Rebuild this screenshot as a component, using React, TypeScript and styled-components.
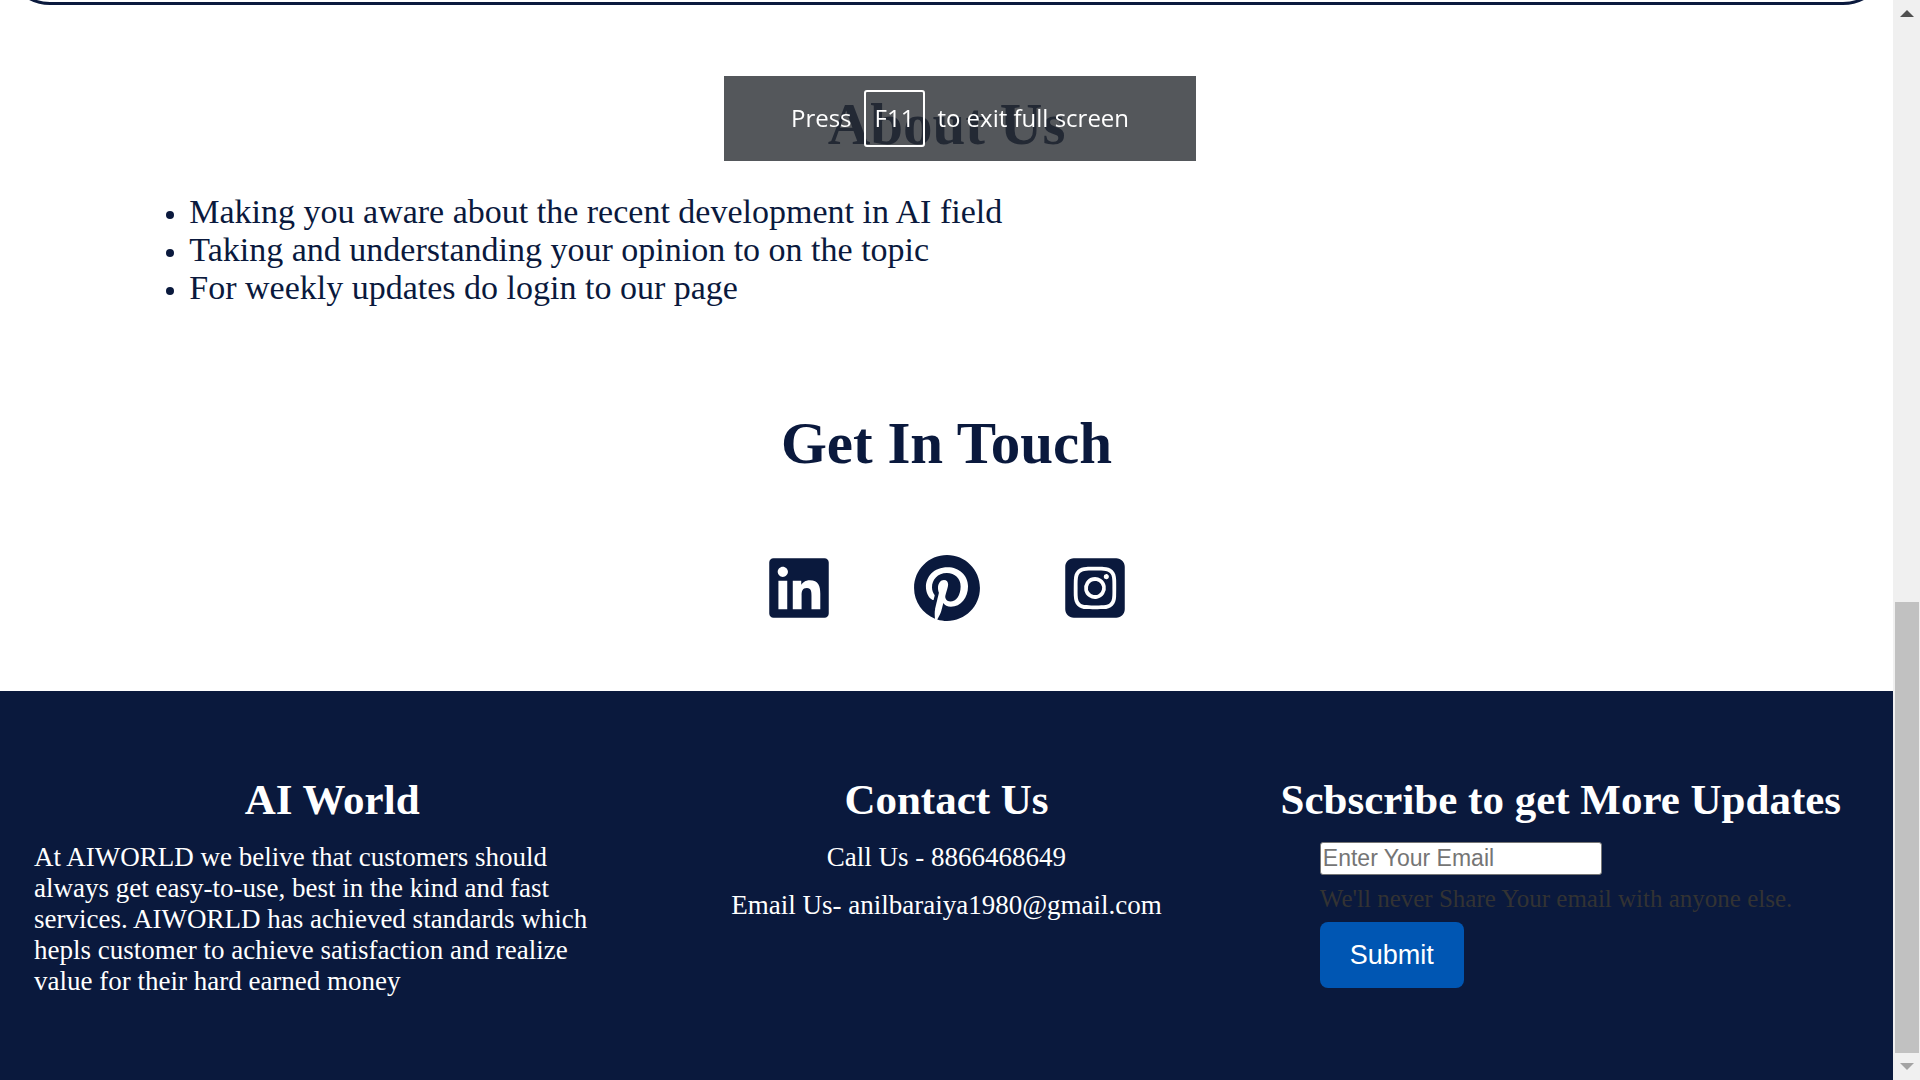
import React from 'react';
import styled, { createGlobalStyle } from 'styled-components';
import { FaLinkedin, FaPinterest, FaSquareInstagram } from 'react-icons/fa6';

const NAVY = '#0a193d';
const SERIF = '"Liberation Serif", "Times New Roman", serif';
const SANS = '"Liberation Sans", Arial, sans-serif';

const GlobalStyle = createGlobalStyle`
  *, *::before, *::after { box-sizing: border-box; }
  body { margin: 0; background: #fff; color: ${NAVY}; font-family: ${SERIF}; }
  h1, h2, p, ul { margin: 0; padding: 0; }
`;

const Screen = styled.div`
  display: flex;
  height: 100vh;
  overflow: hidden;
`;

const Page = styled.div`
  flex: 1;
  min-width: 0;
  display: flex;
  flex-direction: column;
`;

const PanelEnd = styled.div`
  flex: none;
  display: flex;
  flex-direction: column;
  justify-content: flex-end;
  height: 5px;
  padding: 0 5px;
  overflow: hidden;
`;

const Panel = styled.div`
  flex: none;
  height: 120px;
  border: 3px solid ${NAVY};
  border-radius: 45px;
`;

const Section = styled.section`
  display: flex;
  flex-direction: column;
  padding-top: 85px;
`;

const Title = styled.h1`
  font-size: 59px;
  line-height: 68px;
  text-align: center;
`;

const Points = styled.ul`
  margin: 35px 0 17px;
  padding: 0 10%;
  font-size: 34px;
  line-height: 38px;

  li::marker { font-size: 27px; }
`;

const Socials = styled.nav`
  display: flex;
  justify-content: center;
  gap: 80px;
  padding: 77px 0 69px;
`;

const SocialLink = styled.a`
  display: flex;
  color: ${NAVY};
  font-size: 68px;
`;

const Footer = styled.footer`
  flex: 1;
  display: grid;
  grid-template-columns: repeat(3, minmax(0, 1fr));
  gap: 18px;
  align-items: start;
  padding: 84px 34px 40px;
  background: ${NAVY};
  color: #fff;
`;

const Column = styled.div<{ $center?: boolean }>`
  display: flex;
  flex-direction: column;
  gap: 17px;
  font-size: 27px;
  line-height: 31px;
  text-align: ${(p) => (p.$center ? 'center' : 'left')};
`;

const ColumnTitle = styled.h2`
  font-size: 43px;
  line-height: 50px;
  text-align: center;
`;

const Blurb = styled.p`
  padding-right: 24px;
`;

const Form = styled.form`
  display: flex;
  flex-direction: column;
  align-items: flex-start;
  align-self: center;
  width: 482px;
  max-width: 100%;
`;

const EmailInput = styled.input`
  width: 282px;
  height: 33px;
  padding: 1px 2px;
  border: 1px solid #767676;
  border-radius: 3px;
  background: #fff;
  font: 23px ${SANS};
  &::placeholder { color: #757575; }
`;

const Hint = styled.label`
  margin: 8px 0;
  color: #333;
  font-size: 25px;
  line-height: 31px;
`;

const Submit = styled.button`
  padding: 17px 30px;
  border: 0;
  border-radius: 8px;
  background: #0056b3;
  color: #fff;
  font: 27px/32px ${SANS};
`;

const ScrollRail = styled.div`
  display: flex;
  flex-direction: column;
  width: 27px;
  background: #f0f0f0;
`;

const RailArrow = styled.div<{ $down?: boolean }>`
  display: flex;
  justify-content: center;
  align-items: center;
  height: 27px;
  color: ${(p) => (p.$down ? '#a3a3a3' : '#505050')};
`;

const RailTrack = styled.div`
  flex: 1;
  display: flex;
  flex-direction: column;
  justify-content: flex-end;
  padding: 0 1px 0 2px;
`;

const RailThumb = styled.div`
  height: 44%;
  background: #c1c1c1;
`;

const Toast = styled.div`
  position: fixed;
  top: 76px;
  left: 50%;
  transform: translateX(-50%);
  display: flex;
  align-items: baseline;
  justify-content: center;
  gap: 12px;
  width: 472px;
  height: 85px;
  padding-top: 14px;
  background: rgba(41, 45, 50, 0.8);
  color: #fff;
  font: 24px/32px "Open Sans", "Noto Sans", sans-serif;
  white-space: nowrap;
`;

const Key = styled.kbd`
  padding: 10px 9px 11px;
  border: 2px solid #fff;
  border-radius: 3px;
  font: inherit;
`;

const points = [
  'Making you aware about the recent development in AI field',
  'Taking and understanding your opinion to on the topic',
  'For weekly updates do login to our page',
];

const socials = [
  { name: 'LinkedIn', Icon: FaLinkedin },
  { name: 'Pinterest', Icon: FaPinterest },
  { name: 'Instagram', Icon: FaSquareInstagram },
];

export default function App() {
  return (
    <>
      <GlobalStyle />
      <Screen>
        <Page>
          <PanelEnd>
            <Panel />
          </PanelEnd>
          <Section>
            <Title>About Us</Title>
            <Points>
              {points.map((text) => (
                <li key={text}>{text}</li>
              ))}
            </Points>
          </Section>
          <Section>
            <Title>Get In Touch</Title>
            <Socials>
              {socials.map(({ name, Icon }) => (
                <SocialLink key={name} href="#" aria-label={name}>
                  <Icon />
                </SocialLink>
              ))}
            </Socials>
          </Section>
          <Footer>
            <Column>
              <ColumnTitle>AI World</ColumnTitle>
              <Blurb>
                At AIWORLD we belive that customers should always get easy-to-use, best in the kind
                and fast services. AIWORLD has achieved standards which hepls customer to achieve
                satisfaction and realize value for their hard earned money
              </Blurb>
            </Column>
            <Column $center>
              <ColumnTitle>Contact Us</ColumnTitle>
              <p>Call Us - 8866468649</p>
              <p>Email Us- anilbaraiya1980@gmail.com</p>
            </Column>
            <Column>
              <ColumnTitle>Scbscribe to get More Updates</ColumnTitle>
              <Form onSubmit={(e) => e.preventDefault()}>
                <EmailInput id="email" type="email" placeholder="Enter Your Email" />
                <Hint htmlFor="email">We'll never Share Your email with anyone else.</Hint>
                <Submit type="submit">Submit</Submit>
              </Form>
            </Column>
          </Footer>
        </Page>
        <ScrollRail aria-hidden="true">
          <RailArrow>
            <svg width="14" height="7" viewBox="0 0 14 7">
              <path d="M0 7L7 0L14 7Z" fill="currentColor" />
            </svg>
          </RailArrow>
          <RailTrack>
            <RailThumb />
          </RailTrack>
          <RailArrow $down>
            <svg width="14" height="7" viewBox="0 0 14 7">
              <path d="M0 0L7 7L14 0Z" fill="currentColor" />
            </svg>
          </RailArrow>
        </ScrollRail>
      </Screen>
      <Toast role="status">
        <span>Press</span>
        <Key>F11</Key>
        <span>to exit full screen</span>
      </Toast>
    </>
  );
}
